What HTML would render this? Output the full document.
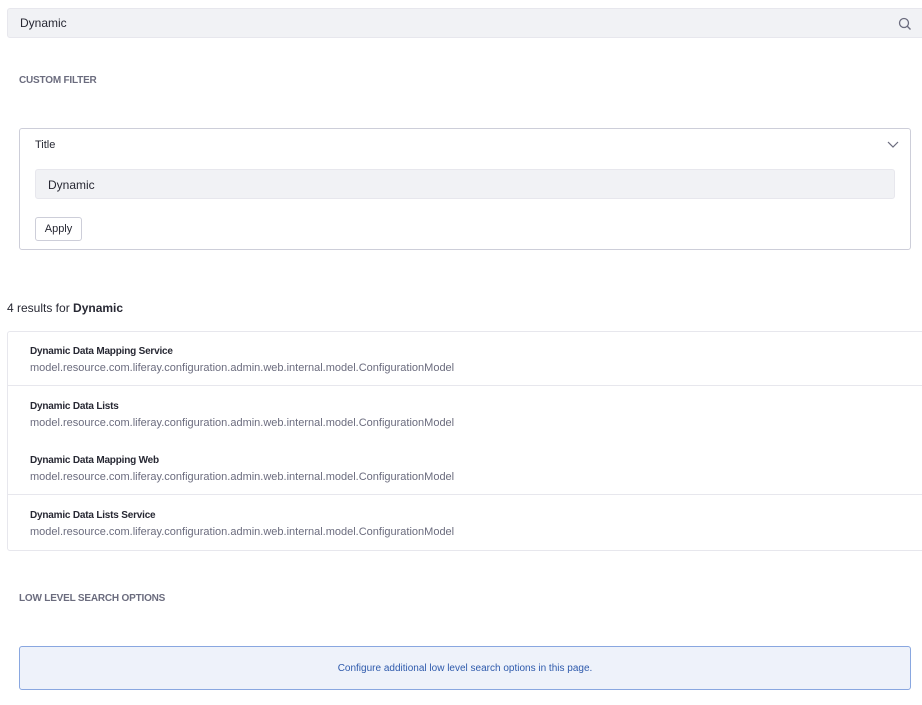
<!DOCTYPE html>
<html><head><style>
*{box-sizing:border-box;margin:0;padding:0}
body{width:922px;height:705px;background:#fff;font-family:"Liberation Sans",sans-serif;color:#272833;position:relative;overflow:hidden}
.abs{position:absolute}
.search{left:7px;top:8px;width:920px;height:30px;background:#f1f2f5;border:1px solid #e7e7ed;border-radius:3px}
.search span{position:absolute;left:12px;top:7px;font-size:12px;color:#272833}
.h{font-size:10px;font-weight:bold;color:#6b6c7e;letter-spacing:-0.2px}
.panel{left:19px;top:128px;width:892px;height:122px;border:1px solid #cdced9;border-radius:3px}
.inp{left:35px;top:169px;width:860px;height:30px;background:#f1f2f5;border:1px solid #e7e7ed;border-radius:3px;font-size:12px;padding:8px 12px}
.btn{left:35px;top:217px;width:47px;height:24px;border:1px solid #cdced9;border-radius:3px;font-size:11px;text-align:center;line-height:23px;color:#272833}
.list{left:7px;top:331px;width:920px;height:220px;border:1px solid #e7e7ed;border-radius:3px}
.row{position:absolute;left:0;width:100%;height:54px;border-bottom:1px solid #e7e7ed}
.row b{position:absolute;left:22px;top:14px;font-size:10px;font-weight:bold;color:#272833;letter-spacing:-0.2px}
.row i{position:absolute;left:22px;top:30px;font-size:11px;font-style:normal;color:#6b6c7e}
.info{left:19px;top:646px;width:892px;height:44px;background:#eef2fa;border:1px solid #89a7e0;border-radius:3px;text-align:center;line-height:43px;font-size:10px;color:#2e5aac}
</style></head><body>
<div class="abs search"><span>Dynamic</span>
<svg style="position:absolute;left:890px;top:8px" width="14" height="14" viewBox="0 0 14 14"><circle cx="6" cy="6" r="4.5" fill="none" stroke="#6b6c7e" stroke-width="1.3"/><line x1="9.3" y1="9.3" x2="12.5" y2="12.5" stroke="#6b6c7e" stroke-width="1.4"/></svg></div>
<div class="abs h" style="left:19px;top:75px">CUSTOM FILTER</div>
<div class="abs panel">
<div style="position:absolute;left:15px;top:10px;font-size:11px;color:#272833">Title</div>
<svg style="position:absolute;left:867px;top:10px" width="12" height="10" viewBox="0 0 12 10"><path d="M1 3 L6 8 L11 3" fill="none" stroke="#6b6c7e" stroke-width="1.2"/></svg>
</div>
<div class="abs inp">Dynamic</div>
<div class="abs btn">Apply</div>
<div class="abs" style="left:7px;top:301px;font-size:12px">4 results for <b>Dynamic</b></div>
<div class="abs list">
<div class="row" style="top:0"><b>Dynamic Data Mapping Service</b><i>model.resource.com.liferay.configuration.admin.web.internal.model.ConfigurationModel</i></div>
<div class="row" style="top:55px;border-bottom:none"><b>Dynamic Data Lists</b><i>model.resource.com.liferay.configuration.admin.web.internal.model.ConfigurationModel</i></div>
<div class="row" style="top:109px"><b>Dynamic Data Mapping Web</b><i>model.resource.com.liferay.configuration.admin.web.internal.model.ConfigurationModel</i></div>
<div class="row" style="top:164px;border-bottom:none"><b>Dynamic Data Lists Service</b><i>model.resource.com.liferay.configuration.admin.web.internal.model.ConfigurationModel</i></div>
</div>
<div class="abs h" style="left:19px;top:593px">LOW LEVEL SEARCH OPTIONS</div>
<div class="abs info">Configure additional low level search options in this page.</div>
</body></html>
